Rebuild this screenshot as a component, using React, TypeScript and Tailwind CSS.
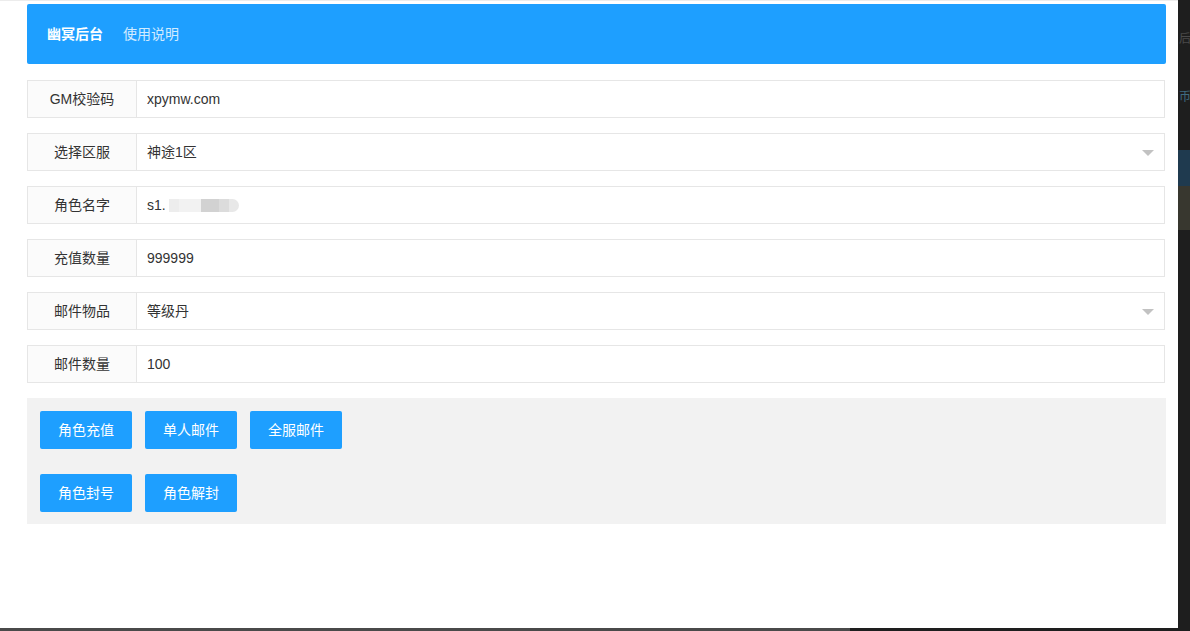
import React from 'react';

const rows: { label: string; value: string; select?: boolean; blur?: boolean }[] = [
  { label: 'GM校验码', value: 'xpymw.com' },
  { label: '选择区服', value: '神途1区', select: true },
  { label: '角色名字', value: 's1.', blur: true },
  { label: '充值数量', value: '999999' },
  { label: '邮件物品', value: '等级丹', select: true },
  { label: '邮件数量', value: '100' },
];

const Btn = ({ children }: { children: React.ReactNode }) => (
  <button className="h-[38px] w-[92px] rounded-[2px] bg-[#1e9fff] text-[14px] text-white">{children}</button>
);

export default function App() {
  return (
    <div
      className="flex h-[631px] w-[1190px] flex-col overflow-hidden bg-[#1e1e1e]"
      style={{ fontFamily: '"Liberation Sans", "Noto Sans CJK SC", sans-serif' }}
    >
      <div className="flex flex-1">
        <div className="w-[1178px] shrink-0 border-t border-[#ececec] bg-white pl-[27px] pr-[12px] pt-[3px]">
          <div className="flex h-[60px] items-center rounded-[2px] bg-[#1e9fff] px-[20px] text-[14px]">
            <span className="font-bold text-white">幽冥后台</span>
            <span className="ml-[20px] text-white/80">使用说明</span>
          </div>

          <div className="mr-[1px] mt-[16px] flex flex-col gap-[15px]">
            {rows.map((r) => (
              <div key={r.label} className="flex h-[38px] text-[14px]">
                <div className="flex w-[110px] items-center justify-center border border-[#e6e6e6] bg-[#fbfbfb] text-[#333]">
                  {r.label}
                </div>
                <div className="relative flex flex-1 items-center border border-l-0 border-[#e6e6e6] pl-[10px] text-[#333]">
                  <span>{r.value}</span>
                  {r.blur && (
                    <div className="ml-[3px] flex h-[13px] items-center gap-0">
                      <div className="h-[13px] w-[10px] bg-[#ededed]" />
                      <div className="h-[13px] w-[22px] bg-[#f2f2f2]" />
                      <div className="h-[13px] w-[18px] bg-[#d2d2d2]" />
                      <div className="h-[13px] w-[10px] bg-[#dcdcdc]" />
                      <div className="h-[13px] w-[10px] rounded-r-full bg-[#e8e8e8]" />
                    </div>
                  )}
                  {r.select && (
                    <div className="absolute right-[10px] top-1/2 h-0 w-0 -translate-y-[2px] border-x-[6px] border-t-[6px] border-x-transparent border-t-[#c2c2c2]" />
                  )}
                </div>
              </div>
            ))}
          </div>

          <div className="mt-[15px] flex flex-col gap-[25px] bg-[#f2f2f2] px-[13px] pb-[12px] pt-[13px]">
            <div className="flex gap-[13px]">
              <Btn>角色充值</Btn>
              <Btn>单人邮件</Btn>
              <Btn>全服邮件</Btn>
            </div>
            <div className="flex gap-[13px]">
              <Btn>角色封号</Btn>
              <Btn>角色解封</Btn>
            </div>
          </div>
        </div>

        <div className="flex flex-1 flex-col text-[12px] text-[#555]">
          <div className="h-[150px] pt-[30px]">
            <div className="pl-[1px] text-[#4a4a4a]">后</div>
            <div className="mt-[40px] pl-[1px] text-[#3f6a80]">币</div>
          </div>
          <div className="h-[36px] bg-[#1f3a4f]" />
          <div className="h-[44px] bg-[#38372f]" />
        </div>
      </div>
      <div className="flex h-[3px]">
        <div className="w-[850px] bg-[#4a4a4a]" />
        <div className="flex-1 bg-[#1e1e1e]" />
      </div>
    </div>
  );
}
